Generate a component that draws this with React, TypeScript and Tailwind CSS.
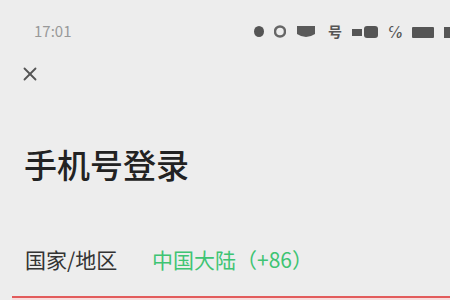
import { X } from 'lucide-react';

function StatusIcons() {
  return (
    <div className="flex items-center gap-[9px] text-[#555]">
      <svg width="12" height="13" viewBox="0 0 12 13"><ellipse cx="6" cy="6.5" rx="5" ry="5.5" fill="#555" /></svg>
      <svg width="12" height="13" viewBox="0 0 12 13"><circle cx="6" cy="6.5" r="5" fill="none" stroke="#666" strokeWidth="2.5" /></svg>
      <svg width="22" height="16" viewBox="0 0 22 16"><path d="M2 2 L20 2 L20 10 Q11 16 2 10 Z" fill="#5a5a5a" /></svg>
      <span className="text-[14px] font-bold ml-[2px]">号</span>
      <svg width="28" height="14" viewBox="0 0 28 14"><rect x="1" y="4" width="10" height="7" fill="#555" /><rect x="13" y="1" width="14" height="12" rx="3" fill="#555" /></svg>
      <span className="text-[14px] font-bold">℅</span>
      <svg width="24" height="14" viewBox="0 0 24 14"><rect x="1" y="2" width="22" height="11" rx="1" fill="#555" /></svg>
      <svg width="6" height="14" viewBox="0 0 6 14"><rect x="0" y="2" width="6" height="11" fill="#555" /></svg>
    </div>
  );
}

export default function App() {
  return (
    <div className="w-[450px] h-[300px] bg-[#ededed] overflow-hidden flex flex-col" style={{ fontFamily: '"Noto Sans CJK SC", "Liberation Sans", sans-serif' }}>
      {/* Status bar */}
      <div className="h-[60px] flex items-start justify-between pt-[21px] pl-[34px] pr-0">
        <span className="text-[15px] text-[#999] leading-none mt-[2px]">17:01</span>
        <StatusIcons />
      </div>

      <div className="pl-[19px] mt-[3px]">
        <X size={22} strokeWidth={2} className="text-[#555]" />
      </div>

      <h1 className="pl-[24px] mt-[63px] text-[33px] leading-none font-medium text-[#222]">手机号登录</h1>

      <div className="flex items-center pl-[25px] mt-[68px] text-[21px] leading-none">
        <span className="text-[#333] w-[127px]">国家/地区</span>
        <span className="text-[#3ec473]">中国大陆（+86）</span>
      </div>

      <div className="ml-[12px] mt-[26px] h-[4px] border-t-2 border-[#e25b5b] bg-[#f7dede]" />
    </div>
  );
}
